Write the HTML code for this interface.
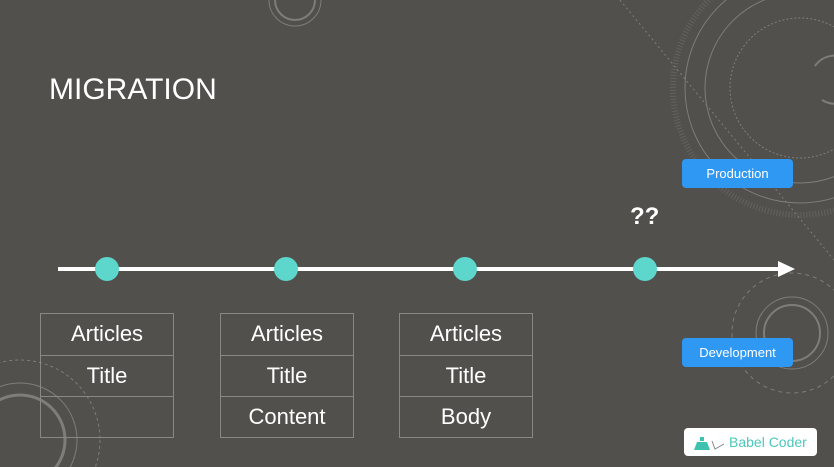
<!DOCTYPE html>
<html><head><style>
html,body{margin:0;width:834px;height:467px;overflow:hidden}
body{background:#52504d;font-family:"Liberation Sans",sans-serif;position:relative}
.t{position:absolute;width:132px;border:1px solid #8a8886;color:#fff;font-size:22px;text-align:center}
.t div{height:40px;line-height:40px;border-top:1px solid #8a8886}
.t div:first-child{border-top:none;height:41px}
.btn{position:absolute;left:682px;width:111px;height:29px;background:#2f98f3;border-radius:4px;color:#fff;font-size:13px;text-align:center;line-height:29px}
</style></head><body>
<svg width="834" height="467" style="position:absolute;left:0;top:0">
<g fill="none" stroke="#7f7d7a" stroke-width="1">
<circle cx="800" cy="88" r="115"/>
<circle cx="800" cy="88" r="95"/>
<circle cx="800" cy="88" r="70" stroke-dasharray="2 2"/>
<path d="M815 66 A24 24 0 1 1 822 100" stroke-width="2"/>
<circle cx="800" cy="88" r="127" stroke-dasharray="1 2" stroke-width="6" opacity=".4"/>
<line x1="620" y1="0" x2="834" y2="260" stroke-dasharray="2 3"/>
<circle cx="792" cy="333" r="28" stroke-width="2"/>
<circle cx="792" cy="333" r="36"/>
<circle cx="792" cy="333" r="60" stroke-dasharray="4 4"/>
<circle cx="20" cy="440" r="45" stroke-width="3"/>
<circle cx="20" cy="440" r="57"/>
<circle cx="20" cy="440" r="80" stroke-dasharray="3 3"/>
<circle cx="295" cy="0" r="26"/>
<circle cx="295" cy="0" r="20" stroke-width="2"/>
</g>
<line x1="58" y1="269" x2="782" y2="269" stroke="#fff" stroke-width="4"/>
<polygon points="778,261 795,269 778,277" fill="#fff"/>
<g fill="#5dd6cc"><circle cx="107" cy="269" r="12"/><circle cx="286" cy="269" r="12"/><circle cx="465" cy="269" r="12"/><circle cx="645" cy="269" r="12"/></g>
</svg>
<div style="position:absolute;left:49px;top:73px;color:#fff;font-size:30px">MIGRATION</div>
<div style="position:absolute;left:630px;top:203px;color:#fff;font-size:24px;font-weight:bold">??</div>
<div class="t" style="left:40px;top:313px"><div>Articles</div><div>Title</div><div></div></div>
<div class="t" style="left:220px;top:313px"><div>Articles</div><div>Title</div><div>Content</div></div>
<div class="t" style="left:399px;top:313px"><div>Articles</div><div>Title</div><div>Body</div></div>
<div class="btn" style="top:159px">Production</div>
<div class="btn" style="top:338px">Development</div>
<div style="position:absolute;left:684px;top:428px;width:133px;height:28px;background:#fff;border-radius:4px;overflow:hidden">
<svg width="36" height="20" style="position:absolute;left:8px;top:5px"><polygon points="2,17 18,17 15,9 5,9" fill="#3cc2ae"/><rect x="8" y="4" width="4" height="4" fill="#3cc2ae"/><path d="M20 8 L23 16 L32 11" stroke="#888" fill="none"/></svg>
<span style="position:absolute;left:45px;top:6px;color:#4bc8bb;font-size:14px">Babel Coder</span></div>
</body></html>
